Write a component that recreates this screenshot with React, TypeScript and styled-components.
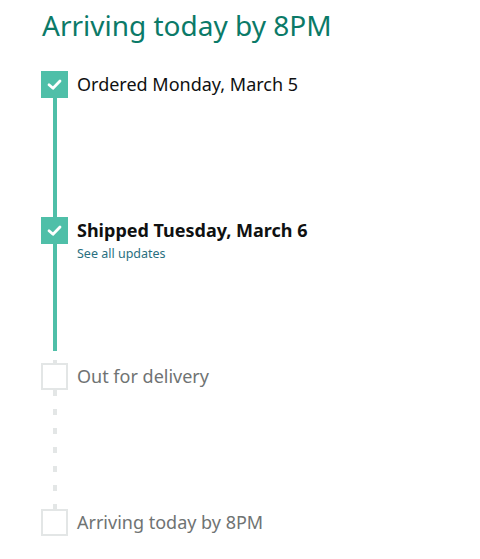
import React from "react";
import styled, { createGlobalStyle, css } from "styled-components";

const Global = createGlobalStyle`
  html, body { margin: 0; padding: 0; background: #ffffff; }
  body { font-family: "Noto Sans", "Open Sans", Arial, sans-serif; color: #0f1111; }
`;

const Page = styled.div`
  padding: 6px 0 0 41px;
`;

const Heading = styled.h1`
  margin: 0 0 27px 1px;
  font-size: 28px;
  line-height: 38px;
  font-weight: 400;
  color: #0b7a68;
`;

const Steps = styled.div`
  display: flex;
  flex-direction: column;
`;

const Step = styled.div<{ $last?: boolean }>`
  display: grid;
  grid-template-columns: 27px 1fr;
  column-gap: 9px;
  height: ${(p) => (p.$last ? "auto" : "146px")};
`;

const Rail = styled.div`
  display: flex;
  flex-direction: column;
  align-items: center;
`;

const Box = styled.div<{ $done?: boolean }>`
  box-sizing: border-box;
  width: 27px;
  height: 27px;
  flex: none;
  display: flex;
  align-items: center;
  justify-content: center;
  ${(p) =>
    p.$done
      ? css`
          background: #4fbfa8;
        `
      : css`
          background: #ffffff;
          border: 2px solid #e3e6e6;
        `}
`;

type ConnKind = "solid" | "partial" | "dashed";

const Connector = styled.div<{ $kind: ConnKind }>`
  width: 4px;
  flex: 1;
  ${(p) =>
    p.$kind === "solid" &&
    css`
      background: #4fbfa8;
    `}
  ${(p) =>
    p.$kind === "partial" &&
    css`
      background: linear-gradient(
        to bottom,
        #4fbfa8 0,
        #4fbfa8 calc(100% - 12px),
        transparent calc(100% - 12px),
        transparent calc(100% - 3px),
        #e3e6e6 calc(100% - 3px)
      );
    `}
  ${(p) =>
    p.$kind === "dashed" &&
    css`
      background: repeating-linear-gradient(
        to bottom,
        #e3e6e6 0,
        #e3e6e6 6px,
        transparent 6px,
        transparent 19px
      );
    `}
`;

const Text = styled.div`
  display: flex;
  flex-direction: column;
`;

const Label = styled.div<{ $state: "done" | "current" | "pending" }>`
  font-size: 18px;
  line-height: 27px;
  color: ${(p) => (p.$state === "pending" ? "#6f7373" : "#0f1111")};
  font-weight: ${(p) => (p.$state === "current" ? 700 : 400)};
`;

const Link = styled.a`
  font-size: 12.5px;
  line-height: 16px;
  color: #2a6f7f;
  text-decoration: none;
  margin-top: 2px;
`;

const Check = () => (
  <svg width="17" height="17" viewBox="0 0 17 17" aria-hidden>
    <path
      d="M3 8.8 L7 12.3 L14 5"
      fill="none"
      stroke="#ffffff"
      strokeWidth="2.8"
      strokeLinecap="round"
      strokeLinejoin="round"
    />
  </svg>
);

export default function App() {
  return (
    <>
      <Global />
      <Page>
        <Heading>Arriving today by 8PM</Heading>
        <Steps>
          <Step>
            <Rail>
              <Box $done>
                <Check />
              </Box>
              <Connector $kind="solid" />
            </Rail>
            <Text>
              <Label $state="done">Ordered Monday, March 5</Label>
            </Text>
          </Step>
          <Step>
            <Rail>
              <Box $done>
                <Check />
              </Box>
              <Connector $kind="partial" />
            </Rail>
            <Text>
              <Label $state="current">Shipped Tuesday, March 6</Label>
              <Link href="#">See all updates</Link>
            </Text>
          </Step>
          <Step>
            <Rail>
              <Box />
              <Connector $kind="dashed" />
            </Rail>
            <Text>
              <Label $state="pending">Out for delivery</Label>
            </Text>
          </Step>
          <Step $last>
            <Rail>
              <Box />
            </Rail>
            <Text>
              <Label $state="pending">Arriving today by 8PM</Label>
            </Text>
          </Step>
        </Steps>
      </Page>
    </>
  );
}
